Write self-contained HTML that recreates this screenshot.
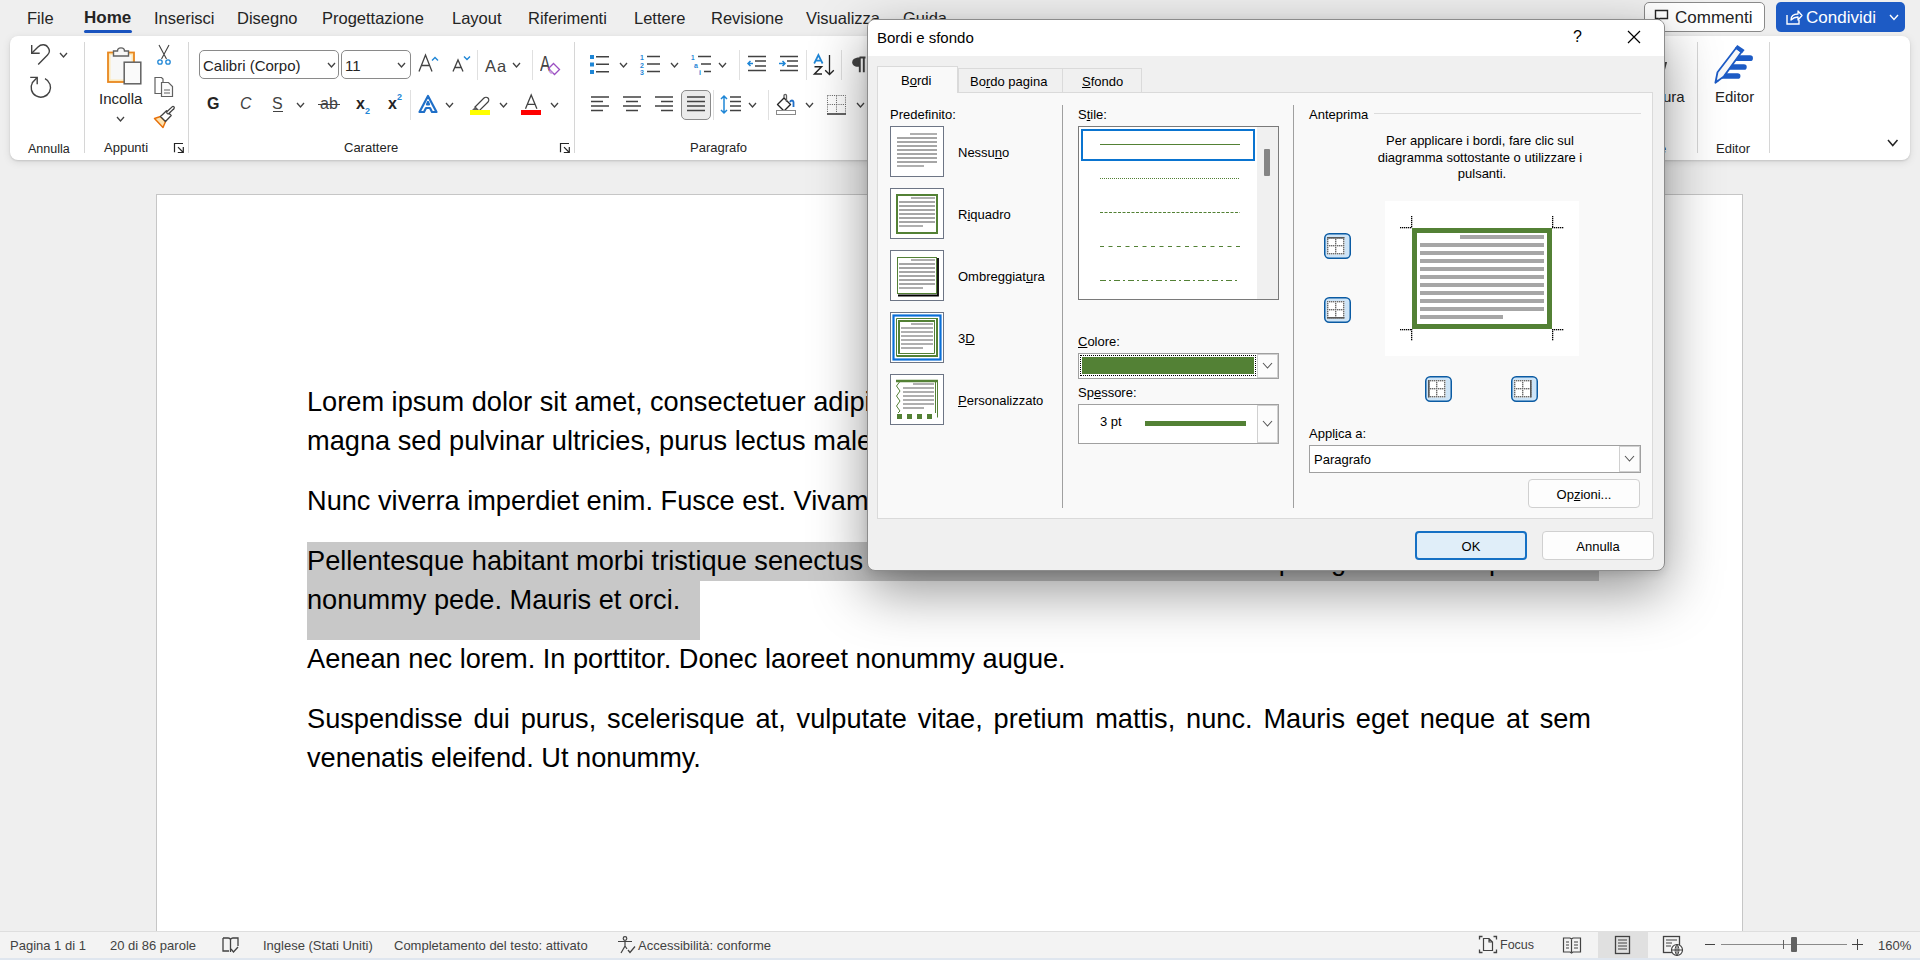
<!DOCTYPE html>
<html><head><meta charset="utf-8"><title>Word</title>
<style>
html,body{margin:0;padding:0;width:1920px;height:960px;overflow:hidden;background:#efefef;font-family:"Liberation Sans", sans-serif;}
.t{position:absolute;line-height:1;white-space:nowrap;}
u{text-decoration:underline;text-underline-offset:1px;text-decoration-thickness:1px}
svg{overflow:visible}
</style></head><body>
<div class="t" style="left:27px;top:9.83px;font-size:16.5px;color:#242424;font-weight:normal;">File</div>
<div class="t" style="left:84px;top:9.41px;font-size:17px;color:#242424;font-weight:bold;">Home</div>
<div class="t" style="left:154px;top:9.83px;font-size:16.5px;color:#242424;font-weight:normal;">Inserisci</div>
<div class="t" style="left:237px;top:9.83px;font-size:16.5px;color:#242424;font-weight:normal;">Disegno</div>
<div class="t" style="left:322px;top:9.83px;font-size:16.5px;color:#242424;font-weight:normal;">Progettazione</div>
<div class="t" style="left:452px;top:9.83px;font-size:16.5px;color:#242424;font-weight:normal;">Layout</div>
<div class="t" style="left:528px;top:9.83px;font-size:16.5px;color:#242424;font-weight:normal;">Riferimenti</div>
<div class="t" style="left:634px;top:9.83px;font-size:16.5px;color:#242424;font-weight:normal;">Lettere</div>
<div class="t" style="left:711px;top:9.83px;font-size:16.5px;color:#242424;font-weight:normal;">Revisione</div>
<div class="t" style="left:806px;top:9.83px;font-size:16.5px;color:#242424;font-weight:normal;">Visualizza</div>
<div class="t" style="left:903px;top:9.83px;font-size:16.5px;color:#242424;font-weight:normal;">Guida</div>
<div style="position:absolute;left:84px;top:30px;width:48px;height:3px;background:#1a54c0;border-radius:2px"></div>
<div style="position:absolute;left:1644px;top:2px;width:121px;height:30px;box-sizing:border-box;border:1px solid #8a8a8a;border-radius:5px;background:#fff"></div>
<svg style="position:absolute;left:1654px;top:9px;" width="16" height="16" viewBox="0 0 16 16"><path d="M1.5 1.5 H13.5 V9.5 H6 L4 11.5 V9.5 H1.5 Z" fill="none" stroke="#242424" stroke-width="1.4"/></svg>
<div class="t" style="left:1675px;top:8.81px;font-size:17px;color:#242424;font-weight:normal;">Commenti</div>
<div style="position:absolute;left:1776px;top:2px;width:129px;height:30px;background:#1d5bc5;border-radius:5px"></div>
<svg style="position:absolute;left:1785px;top:8px;" width="18" height="18" viewBox="0 0 18 18"><path d="M2 7 V16 H14 V12" fill="none" stroke="#fff" stroke-width="1.4"/><path d="M6 12 C6 8 9 6 13 6 V3 L17 7.5 L13 12 V9 C10 9 8 10 6 12Z" fill="none" stroke="#fff" stroke-width="1.3" stroke-linejoin="round"/></svg>
<div class="t" style="left:1806px;top:8.81px;font-size:17px;color:#ffffff;font-weight:normal;">Condividi</div>
<svg style="position:absolute;left:1889px;top:14px;" width="10" height="6.5" viewBox="0 0 10 6.5"><path d="M1 1 L5.0 5.5 L9 1" fill="none" stroke="#fff" stroke-width="1.4"/></svg>
<div style="position:absolute;left:10px;top:36px;width:1900px;height:124px;background:#fff;border-radius:8px;box-shadow:0 1px 2px rgba(0,0,0,0.12), 0 2px 8px rgba(0,0,0,0.10)"></div>
<svg style="position:absolute;left:28px;top:43px;" width="24" height="24" viewBox="0 0 24 24"><path d="M3.7 2 V10.3 H11.7" fill="none" stroke="#424242" stroke-width="1.4"/><path d="M3.7 10.3 L10 4 C13 1 18 1 20 4.5 C22 7 21.5 10 19.5 12 L10.2 21.6" fill="none" stroke="#424242" stroke-width="1.4"/></svg>
<svg style="position:absolute;left:59px;top:52px;" width="9" height="6" viewBox="0 0 9 6"><path d="M1 1 L4.5 5 L8 1" fill="none" stroke="#424242" stroke-width="1.3"/></svg>
<svg style="position:absolute;left:28px;top:75px;" width="24" height="24" viewBox="0 0 24 24"><path d="M2.2 2.4 H9.2 V9.3" fill="none" stroke="#424242" stroke-width="1.4"/><path d="M9.2 2.6 L4 8 M4.5 7.5 A9.7 9.7 0 1 0 17.0 3.7" fill="none" stroke="#424242" stroke-width="1.4"/></svg>
<div class="t" style="left:28px;top:143.42px;font-size:12.5px;color:#242424;font-weight:normal;">Annulla</div>
<div style="position:absolute;left:84px;top:42px;width:1px;height:111px;background:#d6d6d6"></div>
<svg style="position:absolute;left:105px;top:45px;" width="40" height="40" viewBox="0 0 40 40"><rect x="3" y="7.5" width="26" height="29.5" fill="#fde9b8" stroke="#e8871e" stroke-width="1.8"/><rect x="5.5" y="10" width="21" height="24.5" fill="#f7f7f7"/><path d="M8.5 11 V6 H12.5 C12.5 1.8 19.5 1.8 19.5 6 H23.5 V11 Z" fill="#f7f7f7" stroke="#616161" stroke-width="1.4"/><rect x="19.2" y="17.2" width="16.6" height="21.6" fill="#fafafa" stroke="#616161" stroke-width="1.5"/></svg>
<div class="t" style="left:99px;top:91.10px;font-size:15px;color:#242424;font-weight:normal;">Incolla</div>
<svg style="position:absolute;left:116px;top:116px;" width="9" height="6" viewBox="0 0 9 6"><path d="M1 1 L4.5 5 L8 1" fill="none" stroke="#424242" stroke-width="1.3"/></svg>
<svg style="position:absolute;left:155px;top:44px;" width="18" height="22" viewBox="0 0 18 22"><path d="M4 1 L11.5 15 M14 1 L6.5 15" stroke="#424242" stroke-width="1.1" fill="none"/><circle cx="5" cy="18" r="2.2" fill="none" stroke="#1f86d6" stroke-width="1.3"/><circle cx="13" cy="18" r="2.2" fill="none" stroke="#1f86d6" stroke-width="1.3"/></svg>
<svg style="position:absolute;left:153px;top:76px;" width="22" height="22" viewBox="0 0 22 22"><path d="M2 1.5 H8.5 L10 3 V17.5 H2 Z" fill="none" stroke="#616161" stroke-width="1.2"/><path d="M8.5 6.5 H15.5 L19.5 10.5 V20.5 H8.5 Z" fill="#fafafa" stroke="#616161" stroke-width="1.2"/><path d="M11 14 H17 M11 17 H17" stroke="#616161" stroke-width="1.2"/></svg>
<svg style="position:absolute;left:153px;top:107px;" width="24" height="22" viewBox="0 0 24 22"><path d="M1.5 11.5 L7.5 9.5 L12.5 14.5 L10 20.5 Z" fill="#fde3b0" stroke="#e8710a" stroke-width="1.5" stroke-linejoin="round"/><path d="M7.5 9.5 L13.5 3.8 L18.2 8.5 L12.5 14.5 Z" fill="#fff" stroke="#424242" stroke-width="1.3" stroke-linejoin="round"/><path d="M15 5.5 L20 0.8" stroke="#424242" stroke-width="3.8" stroke-linecap="round"/><path d="M15 5.5 L20 0.8" stroke="#fff" stroke-width="1.3" stroke-linecap="round"/></svg>
<div class="t" style="left:104px;top:141.00px;font-size:13px;color:#242424;font-weight:normal;">Appunti</div>
<svg style="position:absolute;left:173px;top:142px;" width="12" height="12" viewBox="0 0 12 12"><path d="M1.5 10.2 V1.5 H10" stroke="#242424" stroke-width="1.2" fill="none"/><path d="M5 5.2 L10.3 10.5 M10.3 5 V10.5 H4.8" stroke="#242424" stroke-width="1.2" fill="none"/></svg>
<div style="position:absolute;left:188px;top:42px;width:1px;height:111px;background:#d6d6d6"></div>
<div style="position:absolute;left:199px;top:50px;width:140px;height:29px;box-sizing:border-box;border:1px solid #8a8a8a;border-radius:5px;background:#fff"></div>
<div class="t" style="left:203px;top:57.90px;font-size:15px;color:#242424;font-weight:normal;">Calibri (Corpo)</div>
<svg style="position:absolute;left:327px;top:62px;" width="9" height="6" viewBox="0 0 9 6"><path d="M1 1 L4.5 5 L8 1" fill="none" stroke="#424242" stroke-width="1.3"/></svg>
<div style="position:absolute;left:341px;top:50px;width:70px;height:29px;box-sizing:border-box;border:1px solid #8a8a8a;border-radius:5px;background:#fff"></div>
<div class="t" style="left:345px;top:57.90px;font-size:15px;color:#242424;font-weight:normal;">11</div>
<svg style="position:absolute;left:397px;top:62px;" width="9" height="6" viewBox="0 0 9 6"><path d="M1 1 L4.5 5 L8 1" fill="none" stroke="#424242" stroke-width="1.3"/></svg>
<svg style="position:absolute;left:418px;top:54px;" width="16" height="18" viewBox="0 0 16 18"><path d="M1 17.6 L7.5 1 L14 17.6 M3.5 11.5 H11.5" fill="none" stroke="#424242" stroke-width="1.3"/></svg>
<svg style="position:absolute;left:431px;top:56px;" width="8" height="6" viewBox="0 0 8 6"><path d="M1 4.5 L4 1.5 L7 4.5" fill="none" stroke="#1f86d6" stroke-width="1.4"/></svg>
<svg style="position:absolute;left:452px;top:59px;" width="13" height="13" viewBox="0 0 13 13"><path d="M1 12.6 L6 1 L11 12.6 M2.8 8.5 H9.2" fill="none" stroke="#424242" stroke-width="1.3"/></svg>
<svg style="position:absolute;left:463px;top:55px;" width="8" height="6" viewBox="0 0 8 6"><path d="M1 1.5 L4 4.5 L7 1.5" fill="none" stroke="#1f86d6" stroke-width="1.4"/></svg>
<div style="position:absolute;left:477px;top:50px;width:1px;height:30px;background:#e0e0e0"></div>
<div class="t" style="left:485px;top:57.63px;font-size:16.5px;color:#424242;font-weight:normal;letter-spacing:1px">Aa</div>
<svg style="position:absolute;left:512px;top:62px;" width="9" height="6" viewBox="0 0 9 6"><path d="M1 1 L4.5 5 L8 1" fill="none" stroke="#424242" stroke-width="1.3"/></svg>
<div style="position:absolute;left:532px;top:50px;width:1px;height:30px;background:#e0e0e0"></div>
<div class="t" style="left:540px;top:52.98px;font-size:22px;color:#424242;font-weight:normal;transform:scaleX(0.7);transform-origin:left">A</div>
<svg style="position:absolute;left:547px;top:62px;" width="14" height="14" viewBox="0 0 14 14"><path d="M6.5 1.5 L12.5 7.5 L7.5 12.5 L1.5 6.5 Z" fill="none" stroke="#9b4fc2" stroke-width="1.3"/><path d="M3 8 L6 11 L4 12 L1.5 9.5Z" fill="#c89ade"/></svg>
<div class="t" style="left:207px;top:96.46px;font-size:16px;color:#242424;font-weight:bold;">G</div>
<div class="t" style="left:240px;top:96.46px;font-size:16px;color:#424242;font-weight:normal;font-style:italic">C</div>
<div class="t" style="left:272px;top:96.46px;font-size:16px;color:#424242;font-weight:normal;">S</div>
<div style="position:absolute;left:273px;top:111px;width:10px;height:1.4px;background:#424242"></div>
<svg style="position:absolute;left:296px;top:102px;" width="9" height="6" viewBox="0 0 9 6"><path d="M1 1 L4.5 5 L8 1" fill="none" stroke="#424242" stroke-width="1.3"/></svg>
<div class="t" style="left:320px;top:96.46px;font-size:16px;color:#424242;font-weight:normal;">ab</div>
<div style="position:absolute;left:318px;top:104px;width:22px;height:1.2px;background:#424242"></div>
<div class="t" style="left:356px;top:96.46px;font-size:16px;color:#242424;font-weight:bold;">x</div>
<div class="t" style="left:365px;top:107.38px;font-size:9px;color:#1f86d6;font-weight:bold;">2</div>
<div class="t" style="left:388px;top:96.46px;font-size:16px;color:#242424;font-weight:bold;">x</div>
<div class="t" style="left:397px;top:93.38px;font-size:9px;color:#1f86d6;font-weight:bold;">2</div>
<div style="position:absolute;left:410px;top:90px;width:1px;height:30px;background:#e0e0e0"></div>
<svg style="position:absolute;left:417px;top:94px;" width="22" height="20" viewBox="0 0 22 20"><path d="M2.5 18 L11 2 L19.5 18 H15 L13 14 H9 L7 18 Z M10 10.5 L11 8 L12 10.5Z" fill="#fff" stroke="#1f6fc8" stroke-width="2.2" stroke-linejoin="round"/></svg>
<svg style="position:absolute;left:445px;top:102px;" width="9" height="6" viewBox="0 0 9 6"><path d="M1 1 L4.5 5 L8 1" fill="none" stroke="#424242" stroke-width="1.3"/></svg>
<svg style="position:absolute;left:470px;top:94px;" width="22" height="22" viewBox="0 0 22 22"><path d="M5 13 L14 4 C15 3 17 3 18 4 C19 5 19 7 18 8 L9 17 Z" fill="#fff" stroke="#424242" stroke-width="1.2"/><path d="M5 13 L2 16 L6 16 L9 17Z" fill="#616161"/></svg>
<div style="position:absolute;left:470px;top:110px;width:20px;height:5px;background:#ffff00"></div>
<svg style="position:absolute;left:499px;top:102px;" width="9" height="6" viewBox="0 0 9 6"><path d="M1 1 L4.5 5 L8 1" fill="none" stroke="#424242" stroke-width="1.3"/></svg>
<svg style="position:absolute;left:523px;top:94px;" width="16" height="16" viewBox="0 0 16 16"><path d="M2.5 14.8 L8.2 1 L13.9 14.8 M4.4 10.3 H12" fill="none" stroke="#424242" stroke-width="1.3"/></svg>
<div style="position:absolute;left:521px;top:110px;width:20px;height:5px;background:#ff0000"></div>
<svg style="position:absolute;left:550px;top:102px;" width="9" height="6" viewBox="0 0 9 6"><path d="M1 1 L4.5 5 L8 1" fill="none" stroke="#424242" stroke-width="1.3"/></svg>
<div class="t" style="left:344px;top:141.00px;font-size:13px;color:#242424;font-weight:normal;">Carattere</div>
<svg style="position:absolute;left:559px;top:142px;" width="12" height="12" viewBox="0 0 12 12"><path d="M1.5 10.2 V1.5 H10" stroke="#242424" stroke-width="1.2" fill="none"/><path d="M5 5.2 L10.3 10.5 M10.3 5 V10.5 H4.8" stroke="#242424" stroke-width="1.2" fill="none"/></svg>
<div style="position:absolute;left:574px;top:42px;width:1px;height:111px;background:#d6d6d6"></div>
<svg style="position:absolute;left:588px;top:53px;" width="24" height="24" viewBox="0 0 24 24"><rect x="2" y="2" width="4" height="4" fill="#1f86d6"/><rect x="2" y="9.5" width="4" height="4" fill="#1f86d6"/><rect x="2" y="17" width="4" height="4" fill="#1f86d6"/><path d="M8 3.8 H21 M8 11.3 H21 M8 18.8 H21" stroke="#424242" stroke-width="1.5"/></svg>
<svg style="position:absolute;left:619px;top:62px;" width="9" height="6" viewBox="0 0 9 6"><path d="M1 1 L4.5 5 L8 1" fill="none" stroke="#424242" stroke-width="1.3"/></svg>
<svg style="position:absolute;left:638px;top:53px;" width="24" height="24" viewBox="0 0 24 24"><text x="2" y="7" font-size="7" font-weight="bold" fill="#1f86d6" font-family="Liberation Sans">1</text><text x="2" y="14.5" font-size="7" font-weight="bold" fill="#1f86d6" font-family="Liberation Sans">2</text><text x="2" y="22" font-size="7" font-weight="bold" fill="#1f86d6" font-family="Liberation Sans">3</text><path d="M9 3.5 H22 M9 11 H22 M9 18.5 H22" stroke="#424242" stroke-width="1.5"/></svg>
<svg style="position:absolute;left:670px;top:62px;" width="9" height="6" viewBox="0 0 9 6"><path d="M1 1 L4.5 5 L8 1" fill="none" stroke="#424242" stroke-width="1.3"/></svg>
<svg style="position:absolute;left:690px;top:53px;" width="24" height="24" viewBox="0 0 24 24"><text x="1" y="7" font-size="6.5" font-weight="bold" fill="#1f86d6" font-family="Liberation Sans">1</text><text x="4" y="14.5" font-size="7" font-weight="bold" fill="#1f86d6" font-family="Liberation Sans">a</text><text x="9" y="22" font-size="7" font-weight="bold" fill="#1f86d6" font-family="Liberation Sans">i</text><path d="M8 3.5 H21 M11 11 H21 M14 18.5 H21" stroke="#424242" stroke-width="1.5"/></svg>
<svg style="position:absolute;left:718px;top:62px;" width="9" height="6" viewBox="0 0 9 6"><path d="M1 1 L4.5 5 L8 1" fill="none" stroke="#424242" stroke-width="1.3"/></svg>
<div style="position:absolute;left:739px;top:50px;width:1px;height:30px;background:#e0e0e0"></div>
<svg style="position:absolute;left:746px;top:53px;" width="24" height="24" viewBox="0 0 24 24"><path d="M2 3.5 H20 M9 8 H20 M9 13 H20 M2 17.5 H20" stroke="#424242" stroke-width="1.5"/><path d="M7 10.5 H2 M4.5 8 L2 10.5 L4.5 13" stroke="#1f86d6" stroke-width="1.5" fill="none"/></svg>
<svg style="position:absolute;left:778px;top:53px;" width="24" height="24" viewBox="0 0 24 24"><path d="M2 3.5 H20 M9 8 H20 M9 13 H20 M2 17.5 H20" stroke="#424242" stroke-width="1.5"/><path d="M1 10.5 H7 M4.5 8 L7 10.5 L4.5 13" stroke="#1f86d6" stroke-width="1.5" fill="none"/></svg>
<div style="position:absolute;left:806px;top:50px;width:1px;height:30px;background:#e0e0e0"></div>
<svg style="position:absolute;left:812px;top:53px;" width="24" height="24" viewBox="0 0 24 24"><path d="M2.2 10.5 L6.4 2 L10.6 10.5 M3.7 7.6 H9.1" fill="none" stroke="#1f86d6" stroke-width="1.7"/><path d="M2.5 13.7 H9.5 L2.5 21 H10" fill="none" stroke="#242424" stroke-width="1.5"/><path d="M17.5 2 V21.5 M13.2 17.2 L17.5 21.5 L21.8 17.2" fill="none" stroke="#242424" stroke-width="1.3"/></svg>
<div style="position:absolute;left:841px;top:50px;width:1px;height:30px;background:#e0e0e0"></div>
<svg style="position:absolute;left:850px;top:55px;" width="18" height="20" viewBox="0 0 18 20"><path d="M9.5 2.5 C4 2.5 2.2 5 2.2 7.3 C2.2 9.8 4.2 11.8 8 11.8 H9.5 Z" fill="#424242"/><path d="M9.5 2.5 H15.5 M9.8 2.5 V17.3 M13.8 2.5 V17.3" fill="none" stroke="#424242" stroke-width="1.9"/></svg>
<svg style="position:absolute;left:589px;top:94px;" width="22" height="22" viewBox="0 0 22 22"><path d="M2 3 H20 M2 7.5 H14 M2 12 H20 M2 16.5 H14" stroke="#424242" stroke-width="1.5"/></svg>
<svg style="position:absolute;left:621px;top:94px;" width="22" height="22" viewBox="0 0 22 22"><path d="M2 3 H20 M5 7.5 H17 M2 12 H20 M5 16.5 H17" stroke="#424242" stroke-width="1.5"/></svg>
<svg style="position:absolute;left:653px;top:94px;" width="22" height="22" viewBox="0 0 22 22"><path d="M2 3 H20 M8 7.5 H20 M2 12 H20 M8 16.5 H20" stroke="#424242" stroke-width="1.5"/></svg>
<div style="position:absolute;left:681px;top:90px;width:30px;height:30px;box-sizing:border-box;border:1px solid #8a8a8a;border-radius:5px;background:#ebebeb"></div>
<svg style="position:absolute;left:685px;top:94px;" width="22" height="22" viewBox="0 0 22 22"><path d="M2 3 H20 M2 7.5 H20 M2 12 H20 M2 16.5 H20" stroke="#424242" stroke-width="1.5"/></svg>
<div style="position:absolute;left:713px;top:90px;width:1px;height:30px;background:#e0e0e0"></div>
<svg style="position:absolute;left:719px;top:94px;" width="24" height="22" viewBox="0 0 24 22"><path d="M5 2 V19 M2 5 L5 2 L8 5 M2 16 L5 19 L8 16" stroke="#1f86d6" stroke-width="1.5" fill="none"/><path d="M11 3 H22 M11 7.5 H22 M11 12 H22 M11 16.5 H22" stroke="#424242" stroke-width="1.5"/></svg>
<svg style="position:absolute;left:748px;top:102px;" width="9" height="6" viewBox="0 0 9 6"><path d="M1 1 L4.5 5 L8 1" fill="none" stroke="#424242" stroke-width="1.3"/></svg>
<div style="position:absolute;left:768px;top:90px;width:1px;height:30px;background:#e0e0e0"></div>
<svg style="position:absolute;left:775px;top:93px;" width="24" height="24" viewBox="0 0 24 24"><path d="M2.5 11.5 L9 5 L15.5 11.5 L9 18 Z" fill="#fff" stroke="#242424" stroke-width="1.4" stroke-linejoin="round"/><path d="M9 5 V2.5 C9 1 11.5 1 11.5 2.5 V9" fill="none" stroke="#616161" stroke-width="1.3"/><path d="M15 9 C16 7 18 7 18.5 9 V14" fill="none" stroke="#1f6fc8" stroke-width="1.8"/><rect x="1.5" y="17.5" width="19" height="4" fill="#fff" stroke="#8a8a8a" stroke-width="1"/></svg>
<svg style="position:absolute;left:805px;top:102px;" width="9" height="6" viewBox="0 0 9 6"><path d="M1 1 L4.5 5 L8 1" fill="none" stroke="#424242" stroke-width="1.3"/></svg>
<svg style="position:absolute;left:826px;top:94px;" width="22" height="22" viewBox="0 0 22 22"><path d="M1.5 1.5 H19.5 V19.5 M1.5 1.5 V19.5 M10.5 1.5 V19.5 M1.5 10.5 H19.5" stroke="#616161" stroke-width="1" stroke-dasharray="1 1.2" fill="none"/><path d="M1 20 H20" stroke="#424242" stroke-width="1.6"/></svg>
<svg style="position:absolute;left:856px;top:102px;" width="9" height="6" viewBox="0 0 9 6"><path d="M1 1 L4.5 5 L8 1" fill="none" stroke="#424242" stroke-width="1.3"/></svg>
<div class="t" style="left:690px;top:140.60px;font-size:13px;color:#242424;font-weight:normal;">Paragrafo</div>
<div class="t" style="left:1663px;top:89.00px;font-size:15px;color:#242424;font-weight:normal;">ura</div>
<div style="position:absolute;left:1664px;top:62px;width:2.2px;height:8px;background:#424242;transform:skewX(-15deg)"></div>
<div class="t" style="left:1659px;top:141.50px;font-size:13px;color:#242424;font-weight:normal;">e</div>
<div style="position:absolute;left:1697px;top:42px;width:1px;height:111px;background:#d6d6d6"></div>
<svg style="position:absolute;left:1713px;top:44px;" width="42" height="40" viewBox="0 0 42 40"><path d="M23 14.2 H37.1 M16.6 23 H30.9 M10 32 H24.6" stroke="#1d5bc5" stroke-width="5.7" stroke-linecap="round"/><path d="M23.3 3.8 L28.5 8 L10.9 32.4 L2.4 38.7 L4.5 28.3 Z" fill="#f8f8f8" stroke="#1d5bc5" stroke-width="1.8" stroke-linejoin="round"/><path d="M24.3 1 L31.6 5.9 L29 9.2 L21.8 4.2 Z" fill="#1d5bc5"/><path d="M2.4 38.7 L4 35.5 L6 37 Z" fill="#1d5bc5"/></svg>
<div class="t" style="left:1715px;top:89.00px;font-size:15px;color:#242424;font-weight:normal;">Editor</div>
<div class="t" style="left:1716px;top:141.50px;font-size:13px;color:#242424;font-weight:normal;">Editor</div>
<div style="position:absolute;left:1769px;top:42px;width:1px;height:111px;background:#d6d6d6"></div>
<svg style="position:absolute;left:1887px;top:139px;" width="11.5" height="7.5" viewBox="0 0 11.5 7.5"><path d="M1 1 L5.75 6.5 L10.5 1" fill="none" stroke="#242424" stroke-width="1.5"/></svg>
<div style="position:absolute;left:0px;top:160px;width:1920px;height:771px;background:#efefef;z-index:-1"></div>
<div style="position:absolute;left:156px;top:194px;width:1587px;height:737px;box-sizing:border-box;border:1px solid #c6c6c6;border-bottom:none;background:#fff"></div>
<div style="position:absolute;left:307px;top:542px;width:1292px;height:39px;background:#c8c8c8"></div>
<div style="position:absolute;left:307px;top:581px;width:393px;height:59px;background:#c8c8c8"></div>
<div class="t" style="left:307px;top:387.98px;font-size:27.2px;color:#000;">Lorem ipsum dolor sit amet, consectetuer adipiscing elit. Maecenas porttitor congue massa. Fusce</div>
<div class="t" style="left:307px;top:426.98px;font-size:27.2px;color:#000;">magna sed pulvinar ultricies, purus lectus malesuada libero, sit amet commodo magna eros quis urna.</div>
<div class="t" style="left:307px;top:486.98px;font-size:27.2px;color:#000;">Nunc viverra imperdiet enim. Fusce est. Vivamus a tellus.</div>
<div class="t" style="left:307px;top:546.98px;font-size:27.2px;color:#000;">Pellentesque habitant morbi tristique senectus et netus et malesuada fames ac</div>
<div class="t" style="left:1247px;top:546.98px;font-size:27.2px;color:#000;">turpis</div>
<div class="t" style="left:1316px;top:546.98px;font-size:27.2px;color:#000;">egestas.</div>
<div class="t" style="left:1489px;top:546.98px;font-size:27.2px;color:#000;">pharetra</div>
<div class="t" style="left:307px;top:585.98px;font-size:27.2px;color:#000;">nonummy pede. Mauris et orci.</div>
<div class="t" style="left:307px;top:644.98px;font-size:27.2px;color:#000;">Aenean nec lorem. In porttitor. Donec laoreet nonummy augue.</div>
<div class="t" style="left:307px;top:704.98px;width:1284px;font-size:27.2px;color:#000;text-align:justify;text-align-last:justify;white-space:normal">Suspendisse dui purus, scelerisque at, vulputate vitae, pretium mattis, nunc. Mauris eget neque at sem</div>
<div class="t" style="left:307px;top:743.98px;font-size:27.2px;color:#000;">venenatis eleifend. Ut nonummy.</div>
<div style="position:absolute;left:0px;top:931px;width:1920px;height:29px;background:#f3f3f3;border-top:1px solid #dedede;box-sizing:border-box"></div>
<div style="position:absolute;left:0px;top:958px;width:1920px;height:2px;background:#dfe6ef"></div>
<div class="t" style="left:10px;top:939.00px;font-size:13px;color:#424242;font-weight:normal;">Pagina 1 di 1</div>
<div class="t" style="left:110px;top:939.00px;font-size:13px;color:#424242;font-weight:normal;">20 di 86 parole</div>
<svg style="position:absolute;left:221px;top:936px;" width="20" height="18" viewBox="0 0 20 18"><path d="M2 2 H7 C8.5 2 9.5 3 9.5 4 C9.5 3 10.5 2 12 2 H17 V10 M9.5 4 V16 M2 2 V15 H8" fill="none" stroke="#424242" stroke-width="1.3"/><path d="M10 13 L12.5 16 L17 11" fill="none" stroke="#424242" stroke-width="1.3"/></svg>
<div class="t" style="left:263px;top:939.00px;font-size:13px;color:#424242;font-weight:normal;">Inglese (Stati Uniti)</div>
<div class="t" style="left:394px;top:939.00px;font-size:13px;color:#424242;font-weight:normal;">Completamento del testo: attivato</div>
<svg style="position:absolute;left:616px;top:935px;" width="22" height="20" viewBox="0 0 22 20"><circle cx="9" cy="3.5" r="1.8" fill="none" stroke="#424242" stroke-width="1.2"/><path d="M2 6.5 H16 M9 6.5 V11 L5 18 M9 11 L11 14" fill="none" stroke="#424242" stroke-width="1.2"/><path d="M12 15 L14 17.5 L19 11.5" fill="none" stroke="#424242" stroke-width="1.3"/></svg>
<div class="t" style="left:638px;top:939.00px;font-size:13px;color:#424242;font-weight:normal;">Accessibilità: conforme</div>
<svg style="position:absolute;left:1478px;top:935px;" width="20" height="19" viewBox="0 0 20 19"><path d="M1.5 4.5 V1.5 H4.5 M15.5 1.5 H18.5 V4.5 M18.5 14.5 V17.5 H15.5 M4.5 17.5 H1.5 V14.5" fill="none" stroke="#424242" stroke-width="1.3"/><path d="M5.5 3.5 H11 L14.5 7 V15.5 H5.5 Z M11 3.5 V7 H14.5" fill="none" stroke="#424242" stroke-width="1.2"/></svg>
<div class="t" style="left:1500px;top:939.42px;font-size:12.5px;color:#424242;font-weight:normal;">Focus</div>
<svg style="position:absolute;left:1562px;top:935px;" width="20" height="20" viewBox="0 0 20 20"><path d="M1.5 3 H8 L9.5 4 L11 3 H18.5 V17 H11 L9.5 18 L8 17 H1.5 Z M9.5 4 V17" fill="none" stroke="#424242" stroke-width="1.2"/><path d="M4 7 H7 M4 10 H7 M4 13 H7 M12 7 H16 M12 10 H16 M12 13 H16" stroke="#424242" stroke-width="1.2"/></svg>
<div style="position:absolute;left:1598px;top:931px;width:50px;height:27px;background:#e0e0e0"></div>
<svg style="position:absolute;left:1613px;top:935px;" width="20" height="20" viewBox="0 0 20 20"><rect x="2.5" y="1.5" width="14" height="17" fill="none" stroke="#424242" stroke-width="1.3"/><path d="M5 5 H14 M5 8 H14 M5 11 H14 M5 14 H14" stroke="#424242" stroke-width="1.2"/></svg>
<svg style="position:absolute;left:1662px;top:935px;" width="22" height="22" viewBox="0 0 22 22"><rect x="1.5" y="1.5" width="16" height="16" fill="none" stroke="#424242" stroke-width="1.3"/><path d="M4 5 H15 M4 8 H10 M4 11 H9" stroke="#424242" stroke-width="1.2"/><circle cx="15" cy="15" r="5.5" fill="#fff" stroke="#424242" stroke-width="1.2"/><path d="M9.5 15 H20.5 M15 9.5 V20.5 M15 9.5 C12.5 12 12.5 18 15 20.5 M15 9.5 C17.5 12 17.5 18 15 20.5" fill="none" stroke="#424242" stroke-width="1"/></svg>
<div style="position:absolute;left:1705px;top:944px;width:10px;height:1.3px;background:#424242"></div>
<div style="position:absolute;left:1721px;top:944px;width:126px;height:1px;background:#8a8a8a"></div>
<div style="position:absolute;left:1783px;top:940px;width:1px;height:9px;background:#616161"></div>
<div style="position:absolute;left:1791px;top:937px;width:6px;height:15px;background:#616161;border-radius:1px"></div>
<div style="position:absolute;left:1852px;top:944px;width:11px;height:1.3px;background:#424242"></div>
<div style="position:absolute;left:1856.8px;top:939px;width:1.3px;height:11px;background:#424242"></div>
<div class="t" style="left:1878px;top:939.00px;font-size:13px;color:#424242;font-weight:normal;">160%</div>
<div id="dlg" style="position:absolute;left:867px;top:19px;width:798px;height:552px;box-sizing:border-box;border:1px solid #8c8c8c;border-radius:8px;background:#f0f0f0;box-shadow:0 20px 56px rgba(0,0,0,0.42), 0 3px 8px rgba(0,0,0,0.10);overflow:hidden">
<div style="position:absolute;left:0;top:0;width:100%;height:36px;background:#fff"></div>
</div>
<div class="t" style="left:877px;top:30.30px;font-size:15px;color:#000;font-weight:normal;">Bordi e sfondo</div>
<div class="t" style="left:1573px;top:29.46px;font-size:16px;color:#000;font-weight:normal;">?</div>
<svg style="position:absolute;left:1627px;top:30px;" width="14" height="14" viewBox="0 0 14 14"><path d="M1 1 L13 13 M13 1 L1 13" stroke="#000" stroke-width="1.2"/></svg>
<div style="position:absolute;left:958px;top:68px;width:105px;height:25px;box-sizing:border-box;border:1px solid #dadada;border-bottom:none;background:#f0f0f0"></div>
<div style="position:absolute;left:1063px;top:68px;width:79px;height:25px;box-sizing:border-box;border:1px solid #dadada;border-left:none;border-bottom:none;background:#f0f0f0"></div>
<div style="position:absolute;left:877px;top:92px;width:776px;height:427px;box-sizing:border-box;border:1px solid #dadada;background:#f9f9f9"></div>
<div style="position:absolute;left:877px;top:66px;width:81px;height:27px;box-sizing:border-box;border:1px solid #dadada;border-bottom:none;background:#f9f9f9"></div>
<div class="t" style="left:901px;top:74.00px;font-size:13px;color:#000;font-weight:normal;">B<u>o</u>rdi</div>
<div class="t" style="left:970px;top:74.50px;font-size:13px;color:#000;font-weight:normal;">Bo<u>r</u>do pagina</div>
<div class="t" style="left:1082px;top:74.50px;font-size:13px;color:#000;font-weight:normal;"><u>S</u>fondo</div>
<div style="position:absolute;left:1062px;top:105px;width:1px;height:403px;background:#a0a0a0"></div>
<div style="position:absolute;left:1293px;top:105px;width:1px;height:403px;background:#a0a0a0"></div>
<div class="t" style="left:890px;top:108.00px;font-size:13px;color:#000;font-weight:normal;">Predefinito:</div>
<svg style="position:absolute;left:890px;top:126px;" width="54" height="51" viewBox="0 0 54 51"><rect x="0.5" y="0.5" width="53" height="50" fill="#fff" stroke="#6d7585" stroke-width="1"/><path d="M20 8 H47" stroke="#a6a6a6" stroke-width="1.8"/><path d="M7 12 H47" stroke="#a6a6a6" stroke-width="1.8"/><path d="M7 16 H47" stroke="#a6a6a6" stroke-width="1.8"/><path d="M7 20 H47" stroke="#a6a6a6" stroke-width="1.8"/><path d="M7 24 H47" stroke="#a6a6a6" stroke-width="1.8"/><path d="M7 28 H47" stroke="#a6a6a6" stroke-width="1.8"/><path d="M7 32 H47" stroke="#a6a6a6" stroke-width="1.8"/><path d="M7 36 H47" stroke="#a6a6a6" stroke-width="1.8"/><path d="M7 40 H34" stroke="#a6a6a6" stroke-width="1.8"/></svg>
<div class="t" style="left:958px;top:145.70px;font-size:13px;color:#000;font-weight:normal;">Nessu<u>n</u>o</div>
<svg style="position:absolute;left:890px;top:188px;" width="54" height="51" viewBox="0 0 54 51"><rect x="0.5" y="0.5" width="53" height="50" fill="#fff" stroke="#6d7585" stroke-width="1"/><rect x="7" y="7" width="40" height="38" fill="none" stroke="#538135" stroke-width="2"/><path d="M21 10 H45" stroke="#a6a6a6" stroke-width="1.8"/><path d="M9 14 H45" stroke="#a6a6a6" stroke-width="1.8"/><path d="M9 18 H45" stroke="#a6a6a6" stroke-width="1.8"/><path d="M9 22 H45" stroke="#a6a6a6" stroke-width="1.8"/><path d="M9 26 H45" stroke="#a6a6a6" stroke-width="1.8"/><path d="M9 30 H45" stroke="#a6a6a6" stroke-width="1.8"/><path d="M9 34 H45" stroke="#a6a6a6" stroke-width="1.8"/><path d="M9 38 H33" stroke="#a6a6a6" stroke-width="1.8"/></svg>
<div class="t" style="left:958px;top:207.70px;font-size:13px;color:#000;font-weight:normal;">R<u>i</u>quadro</div>
<svg style="position:absolute;left:890px;top:250px;" width="54" height="51" viewBox="0 0 54 51"><rect x="0.5" y="0.5" width="53" height="50" fill="#fff" stroke="#6d7585" stroke-width="1"/><path d="M8 45.5 H48 V8" fill="none" stroke="#000" stroke-width="1.8"/><rect x="7.5" y="7.5" width="39" height="36" fill="#fff" stroke="#538135" stroke-width="1"/><path d="M21 10 H45" stroke="#a6a6a6" stroke-width="1.8"/><path d="M9 14 H45" stroke="#a6a6a6" stroke-width="1.8"/><path d="M9 18 H45" stroke="#a6a6a6" stroke-width="1.8"/><path d="M9 22 H45" stroke="#a6a6a6" stroke-width="1.8"/><path d="M9 26 H45" stroke="#a6a6a6" stroke-width="1.8"/><path d="M9 30 H45" stroke="#a6a6a6" stroke-width="1.8"/><path d="M9 34 H45" stroke="#a6a6a6" stroke-width="1.8"/><path d="M9 38 H33" stroke="#a6a6a6" stroke-width="1.8"/></svg>
<div class="t" style="left:958px;top:269.70px;font-size:13px;color:#000;font-weight:normal;">Ombreggiat<u>u</u>ra</div>
<svg style="position:absolute;left:890px;top:312px;" width="54" height="51" viewBox="0 0 54 51"><rect x="0.5" y="0.5" width="53" height="50" fill="#fff" stroke="#6d7585" stroke-width="1"/><rect x="3.5" y="3.5" width="47" height="44" fill="none" stroke="#0a6fd8" stroke-width="2.2"/><path d="M6.5 44.5 V6.5 H47" fill="none" stroke="#538135" stroke-width="1"/><path d="M7 44 H47 V6" fill="none" stroke="#538135" stroke-width="2"/><path d="M9 42 V9 H44.5" fill="none" stroke="#538135" stroke-width="2"/><path d="M8 41.5 H44.5 V8" fill="none" stroke="#538135" stroke-width="1"/><path d="M21 12 H43" stroke="#a6a6a6" stroke-width="1.8"/><path d="M11 16 H43" stroke="#a6a6a6" stroke-width="1.8"/><path d="M11 20 H43" stroke="#a6a6a6" stroke-width="1.8"/><path d="M11 24 H43" stroke="#a6a6a6" stroke-width="1.8"/><path d="M11 28 H43" stroke="#a6a6a6" stroke-width="1.8"/><path d="M11 32 H43" stroke="#a6a6a6" stroke-width="1.8"/><path d="M11 36 H33" stroke="#a6a6a6" stroke-width="1.8"/></svg>
<div class="t" style="left:958px;top:331.70px;font-size:13px;color:#000;font-weight:normal;">3<u>D</u></div>
<svg style="position:absolute;left:890px;top:374px;" width="54" height="51" viewBox="0 0 54 51"><rect x="0.5" y="0.5" width="53" height="50" fill="#fff" stroke="#6d7585" stroke-width="1"/><path d="M6 7 H48" stroke="#538135" stroke-width="2.5"/><path d="M45.5 8 V39 M47.5 8 V43.5" stroke="#538135" stroke-width="1"/><path d="M9.5 8 L6.5 12 L10 17 L6.5 22 L10 27 L6.5 32 L10 37 L8 39" fill="none" stroke="#538135" stroke-width="1"/><rect x="7" y="40" width="5" height="5" fill="#538135"/><rect x="17" y="40" width="5" height="5" fill="#538135"/><rect x="27" y="40" width="5" height="5" fill="#538135"/><rect x="37" y="40" width="5" height="5" fill="#538135"/><path d="M23 10 H44" stroke="#a6a6a6" stroke-width="1.8"/><path d="M13 14 H44" stroke="#a6a6a6" stroke-width="1.8"/><path d="M13 18 H44" stroke="#a6a6a6" stroke-width="1.8"/><path d="M13 22 H44" stroke="#a6a6a6" stroke-width="1.8"/><path d="M13 26 H44" stroke="#a6a6a6" stroke-width="1.8"/><path d="M13 30 H44" stroke="#a6a6a6" stroke-width="1.8"/><path d="M13 34 H34" stroke="#a6a6a6" stroke-width="1.8"/></svg>
<div class="t" style="left:958px;top:393.70px;font-size:13px;color:#000;font-weight:normal;"><u>P</u>ersonalizzato</div>
<div class="t" style="left:1078px;top:107.80px;font-size:13px;color:#000;font-weight:normal;">S<u>t</u>ile:</div>
<div style="position:absolute;left:1078px;top:126px;width:201px;height:174px;box-sizing:border-box;border:1px solid #7a7a7a;background:#fff"></div>
<div style="position:absolute;left:1257px;top:127px;width:21px;height:172px;background:#f0f0f0"></div>
<div style="position:absolute;left:1264px;top:149px;width:6px;height:27px;background:#858585;border-radius:1px"></div>
<div style="position:absolute;left:1081px;top:129px;width:174px;height:32px;box-sizing:border-box;border:2px solid #0a74d0"></div>
<svg style="position:absolute;left:1098px;top:140px;" width="145" height="145" viewBox="0 0 145 145"><path d="M2 4.5 H142" stroke="#538135" stroke-width="1.2"/><path d="M2 38.5 H142" stroke="#538135" stroke-width="1" stroke-dasharray="1 1"/><path d="M2 72.5 H142" stroke="#538135" stroke-width="1.2" stroke-dasharray="3 1.5"/><path d="M2 106.5 H142" stroke="#538135" stroke-width="1.2" stroke-dasharray="4 4.5"/><path d="M2 140.5 H142" stroke="#538135" stroke-width="1.2" stroke-dasharray="6 3 2 3"/></svg>
<div class="t" style="left:1078px;top:335.30px;font-size:13px;color:#000;font-weight:normal;"><u>C</u>olore:</div>
<div style="position:absolute;left:1078px;top:353px;width:201px;height:26px;box-sizing:border-box;border:1px solid #a0a0a0;background:#fff"></div>
<div style="position:absolute;left:1080px;top:355px;width:176px;height:21px;box-sizing:border-box;border:1px dotted #000"></div>
<div style="position:absolute;left:1082px;top:357px;width:172px;height:17px;background:#538135"></div>
<div style="position:absolute;left:1257px;top:354px;width:21px;height:24px;box-sizing:border-box;border:1px solid #d0d0d0;background:#fcfcfc"></div>
<svg style="position:absolute;left:1262px;top:362px;" width="11" height="7" viewBox="0 0 11 7"><path d="M1 1 L5.5 6 L10 1" fill="none" stroke="#555" stroke-width="1.1"/></svg>
<div class="t" style="left:1078px;top:386.00px;font-size:13px;color:#000;font-weight:normal;">Sp<u>e</u>ssore:</div>
<div style="position:absolute;left:1078px;top:404px;width:201px;height:40px;box-sizing:border-box;border:1px solid #a0a0a0;background:#fff"></div>
<div class="t" style="left:1100px;top:415.30px;font-size:13px;color:#000;font-weight:normal;">3 pt</div>
<div style="position:absolute;left:1145px;top:421px;width:101px;height:5px;background:#538135"></div>
<div style="position:absolute;left:1257px;top:405px;width:21px;height:38px;box-sizing:border-box;border:1px solid #d0d0d0;background:#fcfcfc"></div>
<svg style="position:absolute;left:1262px;top:420px;" width="11" height="7" viewBox="0 0 11 7"><path d="M1 1 L5.5 6 L10 1" fill="none" stroke="#555" stroke-width="1.1"/></svg>
<div class="t" style="left:1309px;top:108.30px;font-size:13px;color:#000;font-weight:normal;">Anteprima</div>
<div style="position:absolute;left:1374px;top:113px;width:267px;height:1px;background:#dcdcdc"></div>
<div class="t" style="left:1180px;width:600px;text-align:center;top:134.00px;font-size:13px;color:#000;">Per applicare i bordi, fare clic sul</div>
<div class="t" style="left:1180px;width:600px;text-align:center;top:150.70px;font-size:13px;color:#000;">diagramma sottostante o utilizzare i</div>
<div class="t" style="left:1182px;width:600px;text-align:center;top:167.30px;font-size:13px;color:#000;">pulsanti.</div>
<div style="position:absolute;left:1385px;top:201px;width:194px;height:155px;background:#fff"></div>
<svg style="position:absolute;left:1385px;top:201px;" width="194" height="155" viewBox="0 0 194 155"><rect x="29.5" y="29.5" width="135" height="96" fill="none" stroke="#538135" stroke-width="5"/><rect x="75" y="34" width="84" height="4" fill="#a6a6a6"/><rect x="35" y="42" width="124" height="4" fill="#a6a6a6"/><rect x="35" y="50" width="124" height="4" fill="#a6a6a6"/><rect x="35" y="58" width="124" height="4" fill="#a6a6a6"/><rect x="35" y="66" width="124" height="4" fill="#a6a6a6"/><rect x="35" y="74" width="124" height="4" fill="#a6a6a6"/><rect x="35" y="82" width="124" height="4" fill="#a6a6a6"/><rect x="35" y="90" width="124" height="4" fill="#a6a6a6"/><rect x="35" y="98" width="124" height="4" fill="#a6a6a6"/><rect x="35" y="106" width="124" height="4" fill="#a6a6a6"/><rect x="35" y="114" width="83" height="4" fill="#a6a6a6"/><rect x="25" y="26" width="1.3" height="1.3" fill="#000"/><rect x="26" y="25" width="1.3" height="1.3" fill="#000"/><rect x="23" y="26" width="1.3" height="1.3" fill="#000"/><rect x="26" y="23" width="1.3" height="1.3" fill="#000"/><rect x="21" y="26" width="1.3" height="1.3" fill="#000"/><rect x="26" y="21" width="1.3" height="1.3" fill="#000"/><rect x="19" y="26" width="1.3" height="1.3" fill="#000"/><rect x="26" y="19" width="1.3" height="1.3" fill="#000"/><rect x="17" y="26" width="1.3" height="1.3" fill="#000"/><rect x="26" y="17" width="1.3" height="1.3" fill="#000"/><rect x="15" y="26" width="1.3" height="1.3" fill="#000"/><rect x="26" y="15" width="1.3" height="1.3" fill="#000"/><rect x="167" y="26" width="1.3" height="1.3" fill="#000"/><rect x="167" y="25" width="1.3" height="1.3" fill="#000"/><rect x="169" y="26" width="1.3" height="1.3" fill="#000"/><rect x="167" y="23" width="1.3" height="1.3" fill="#000"/><rect x="171" y="26" width="1.3" height="1.3" fill="#000"/><rect x="167" y="21" width="1.3" height="1.3" fill="#000"/><rect x="173" y="26" width="1.3" height="1.3" fill="#000"/><rect x="167" y="19" width="1.3" height="1.3" fill="#000"/><rect x="175" y="26" width="1.3" height="1.3" fill="#000"/><rect x="167" y="17" width="1.3" height="1.3" fill="#000"/><rect x="177" y="26" width="1.3" height="1.3" fill="#000"/><rect x="167" y="15" width="1.3" height="1.3" fill="#000"/><rect x="25" y="128" width="1.3" height="1.3" fill="#000"/><rect x="26" y="128" width="1.3" height="1.3" fill="#000"/><rect x="23" y="128" width="1.3" height="1.3" fill="#000"/><rect x="26" y="130" width="1.3" height="1.3" fill="#000"/><rect x="21" y="128" width="1.3" height="1.3" fill="#000"/><rect x="26" y="132" width="1.3" height="1.3" fill="#000"/><rect x="19" y="128" width="1.3" height="1.3" fill="#000"/><rect x="26" y="134" width="1.3" height="1.3" fill="#000"/><rect x="17" y="128" width="1.3" height="1.3" fill="#000"/><rect x="26" y="136" width="1.3" height="1.3" fill="#000"/><rect x="15" y="128" width="1.3" height="1.3" fill="#000"/><rect x="26" y="138" width="1.3" height="1.3" fill="#000"/><rect x="167" y="128" width="1.3" height="1.3" fill="#000"/><rect x="167" y="128" width="1.3" height="1.3" fill="#000"/><rect x="169" y="128" width="1.3" height="1.3" fill="#000"/><rect x="167" y="130" width="1.3" height="1.3" fill="#000"/><rect x="171" y="128" width="1.3" height="1.3" fill="#000"/><rect x="167" y="132" width="1.3" height="1.3" fill="#000"/><rect x="173" y="128" width="1.3" height="1.3" fill="#000"/><rect x="167" y="134" width="1.3" height="1.3" fill="#000"/><rect x="175" y="128" width="1.3" height="1.3" fill="#000"/><rect x="167" y="136" width="1.3" height="1.3" fill="#000"/><rect x="177" y="128" width="1.3" height="1.3" fill="#000"/><rect x="167" y="138" width="1.3" height="1.3" fill="#000"/></svg>
<svg style="position:absolute;left:1324px;top:233px;" width="27" height="26" viewBox="0 0 27 26"><rect x="0.75" y="0.75" width="25.5" height="24.5" rx="4.5" fill="#cde4f7" stroke="#0b5ba3" stroke-width="1.5"/><rect x="3" y="4" width="17.5" height="17.5" fill="#fff"/><rect x="3" y="4" width="1.4" height="1.4" fill="#6a6a6a"/><rect x="3" y="6" width="1.4" height="1.4" fill="#6a6a6a"/><rect x="3" y="8" width="1.4" height="1.4" fill="#6a6a6a"/><rect x="3" y="10" width="1.4" height="1.4" fill="#6a6a6a"/><rect x="3" y="12" width="1.4" height="1.4" fill="#6a6a6a"/><rect x="3" y="14" width="1.4" height="1.4" fill="#6a6a6a"/><rect x="3" y="16" width="1.4" height="1.4" fill="#6a6a6a"/><rect x="3" y="18" width="1.4" height="1.4" fill="#6a6a6a"/><rect x="3" y="20" width="1.4" height="1.4" fill="#6a6a6a"/><rect x="5" y="4" width="1.4" height="1.4" fill="#6a6a6a"/><rect x="5" y="12" width="1.4" height="1.4" fill="#6a6a6a"/><rect x="5" y="20" width="1.4" height="1.4" fill="#6a6a6a"/><rect x="7" y="4" width="1.4" height="1.4" fill="#6a6a6a"/><rect x="7" y="12" width="1.4" height="1.4" fill="#6a6a6a"/><rect x="7" y="20" width="1.4" height="1.4" fill="#6a6a6a"/><rect x="9" y="4" width="1.4" height="1.4" fill="#6a6a6a"/><rect x="9" y="12" width="1.4" height="1.4" fill="#6a6a6a"/><rect x="9" y="20" width="1.4" height="1.4" fill="#6a6a6a"/><rect x="11" y="4" width="1.4" height="1.4" fill="#6a6a6a"/><rect x="11" y="6" width="1.4" height="1.4" fill="#6a6a6a"/><rect x="11" y="8" width="1.4" height="1.4" fill="#6a6a6a"/><rect x="11" y="10" width="1.4" height="1.4" fill="#6a6a6a"/><rect x="11" y="12" width="1.4" height="1.4" fill="#6a6a6a"/><rect x="11" y="14" width="1.4" height="1.4" fill="#6a6a6a"/><rect x="11" y="16" width="1.4" height="1.4" fill="#6a6a6a"/><rect x="11" y="18" width="1.4" height="1.4" fill="#6a6a6a"/><rect x="11" y="20" width="1.4" height="1.4" fill="#6a6a6a"/><rect x="13" y="4" width="1.4" height="1.4" fill="#6a6a6a"/><rect x="13" y="12" width="1.4" height="1.4" fill="#6a6a6a"/><rect x="13" y="20" width="1.4" height="1.4" fill="#6a6a6a"/><rect x="15" y="4" width="1.4" height="1.4" fill="#6a6a6a"/><rect x="15" y="12" width="1.4" height="1.4" fill="#6a6a6a"/><rect x="15" y="20" width="1.4" height="1.4" fill="#6a6a6a"/><rect x="17" y="4" width="1.4" height="1.4" fill="#6a6a6a"/><rect x="17" y="12" width="1.4" height="1.4" fill="#6a6a6a"/><rect x="17" y="20" width="1.4" height="1.4" fill="#6a6a6a"/><rect x="19" y="4" width="1.4" height="1.4" fill="#6a6a6a"/><rect x="19" y="6" width="1.4" height="1.4" fill="#6a6a6a"/><rect x="19" y="8" width="1.4" height="1.4" fill="#6a6a6a"/><rect x="19" y="10" width="1.4" height="1.4" fill="#6a6a6a"/><rect x="19" y="12" width="1.4" height="1.4" fill="#6a6a6a"/><rect x="19" y="14" width="1.4" height="1.4" fill="#6a6a6a"/><rect x="19" y="16" width="1.4" height="1.4" fill="#6a6a6a"/><rect x="19" y="18" width="1.4" height="1.4" fill="#6a6a6a"/><rect x="19" y="20" width="1.4" height="1.4" fill="#6a6a6a"/><rect x="3" y="4" width="17.4" height="1.6" fill="#5a5a5a"/></svg>
<svg style="position:absolute;left:1324px;top:297px;" width="27" height="26" viewBox="0 0 27 26"><rect x="0.75" y="0.75" width="25.5" height="24.5" rx="4.5" fill="#cde4f7" stroke="#0b5ba3" stroke-width="1.5"/><rect x="3" y="4" width="17.5" height="17.5" fill="#fff"/><rect x="3" y="4" width="1.4" height="1.4" fill="#6a6a6a"/><rect x="3" y="6" width="1.4" height="1.4" fill="#6a6a6a"/><rect x="3" y="8" width="1.4" height="1.4" fill="#6a6a6a"/><rect x="3" y="10" width="1.4" height="1.4" fill="#6a6a6a"/><rect x="3" y="12" width="1.4" height="1.4" fill="#6a6a6a"/><rect x="3" y="14" width="1.4" height="1.4" fill="#6a6a6a"/><rect x="3" y="16" width="1.4" height="1.4" fill="#6a6a6a"/><rect x="3" y="18" width="1.4" height="1.4" fill="#6a6a6a"/><rect x="3" y="20" width="1.4" height="1.4" fill="#6a6a6a"/><rect x="5" y="4" width="1.4" height="1.4" fill="#6a6a6a"/><rect x="5" y="12" width="1.4" height="1.4" fill="#6a6a6a"/><rect x="5" y="20" width="1.4" height="1.4" fill="#6a6a6a"/><rect x="7" y="4" width="1.4" height="1.4" fill="#6a6a6a"/><rect x="7" y="12" width="1.4" height="1.4" fill="#6a6a6a"/><rect x="7" y="20" width="1.4" height="1.4" fill="#6a6a6a"/><rect x="9" y="4" width="1.4" height="1.4" fill="#6a6a6a"/><rect x="9" y="12" width="1.4" height="1.4" fill="#6a6a6a"/><rect x="9" y="20" width="1.4" height="1.4" fill="#6a6a6a"/><rect x="11" y="4" width="1.4" height="1.4" fill="#6a6a6a"/><rect x="11" y="6" width="1.4" height="1.4" fill="#6a6a6a"/><rect x="11" y="8" width="1.4" height="1.4" fill="#6a6a6a"/><rect x="11" y="10" width="1.4" height="1.4" fill="#6a6a6a"/><rect x="11" y="12" width="1.4" height="1.4" fill="#6a6a6a"/><rect x="11" y="14" width="1.4" height="1.4" fill="#6a6a6a"/><rect x="11" y="16" width="1.4" height="1.4" fill="#6a6a6a"/><rect x="11" y="18" width="1.4" height="1.4" fill="#6a6a6a"/><rect x="11" y="20" width="1.4" height="1.4" fill="#6a6a6a"/><rect x="13" y="4" width="1.4" height="1.4" fill="#6a6a6a"/><rect x="13" y="12" width="1.4" height="1.4" fill="#6a6a6a"/><rect x="13" y="20" width="1.4" height="1.4" fill="#6a6a6a"/><rect x="15" y="4" width="1.4" height="1.4" fill="#6a6a6a"/><rect x="15" y="12" width="1.4" height="1.4" fill="#6a6a6a"/><rect x="15" y="20" width="1.4" height="1.4" fill="#6a6a6a"/><rect x="17" y="4" width="1.4" height="1.4" fill="#6a6a6a"/><rect x="17" y="12" width="1.4" height="1.4" fill="#6a6a6a"/><rect x="17" y="20" width="1.4" height="1.4" fill="#6a6a6a"/><rect x="19" y="4" width="1.4" height="1.4" fill="#6a6a6a"/><rect x="19" y="6" width="1.4" height="1.4" fill="#6a6a6a"/><rect x="19" y="8" width="1.4" height="1.4" fill="#6a6a6a"/><rect x="19" y="10" width="1.4" height="1.4" fill="#6a6a6a"/><rect x="19" y="12" width="1.4" height="1.4" fill="#6a6a6a"/><rect x="19" y="14" width="1.4" height="1.4" fill="#6a6a6a"/><rect x="19" y="16" width="1.4" height="1.4" fill="#6a6a6a"/><rect x="19" y="18" width="1.4" height="1.4" fill="#6a6a6a"/><rect x="19" y="20" width="1.4" height="1.4" fill="#6a6a6a"/><rect x="3" y="20" width="17.4" height="1.6" fill="#5a5a5a"/></svg>
<svg style="position:absolute;left:1425px;top:376px;" width="27" height="26" viewBox="0 0 27 26"><rect x="0.75" y="0.75" width="25.5" height="24.5" rx="4.5" fill="#cde4f7" stroke="#0b5ba3" stroke-width="1.5"/><rect x="3" y="4" width="17.5" height="17.5" fill="#fff"/><rect x="3" y="4" width="1.4" height="1.4" fill="#6a6a6a"/><rect x="3" y="6" width="1.4" height="1.4" fill="#6a6a6a"/><rect x="3" y="8" width="1.4" height="1.4" fill="#6a6a6a"/><rect x="3" y="10" width="1.4" height="1.4" fill="#6a6a6a"/><rect x="3" y="12" width="1.4" height="1.4" fill="#6a6a6a"/><rect x="3" y="14" width="1.4" height="1.4" fill="#6a6a6a"/><rect x="3" y="16" width="1.4" height="1.4" fill="#6a6a6a"/><rect x="3" y="18" width="1.4" height="1.4" fill="#6a6a6a"/><rect x="3" y="20" width="1.4" height="1.4" fill="#6a6a6a"/><rect x="5" y="4" width="1.4" height="1.4" fill="#6a6a6a"/><rect x="5" y="12" width="1.4" height="1.4" fill="#6a6a6a"/><rect x="5" y="20" width="1.4" height="1.4" fill="#6a6a6a"/><rect x="7" y="4" width="1.4" height="1.4" fill="#6a6a6a"/><rect x="7" y="12" width="1.4" height="1.4" fill="#6a6a6a"/><rect x="7" y="20" width="1.4" height="1.4" fill="#6a6a6a"/><rect x="9" y="4" width="1.4" height="1.4" fill="#6a6a6a"/><rect x="9" y="12" width="1.4" height="1.4" fill="#6a6a6a"/><rect x="9" y="20" width="1.4" height="1.4" fill="#6a6a6a"/><rect x="11" y="4" width="1.4" height="1.4" fill="#6a6a6a"/><rect x="11" y="6" width="1.4" height="1.4" fill="#6a6a6a"/><rect x="11" y="8" width="1.4" height="1.4" fill="#6a6a6a"/><rect x="11" y="10" width="1.4" height="1.4" fill="#6a6a6a"/><rect x="11" y="12" width="1.4" height="1.4" fill="#6a6a6a"/><rect x="11" y="14" width="1.4" height="1.4" fill="#6a6a6a"/><rect x="11" y="16" width="1.4" height="1.4" fill="#6a6a6a"/><rect x="11" y="18" width="1.4" height="1.4" fill="#6a6a6a"/><rect x="11" y="20" width="1.4" height="1.4" fill="#6a6a6a"/><rect x="13" y="4" width="1.4" height="1.4" fill="#6a6a6a"/><rect x="13" y="12" width="1.4" height="1.4" fill="#6a6a6a"/><rect x="13" y="20" width="1.4" height="1.4" fill="#6a6a6a"/><rect x="15" y="4" width="1.4" height="1.4" fill="#6a6a6a"/><rect x="15" y="12" width="1.4" height="1.4" fill="#6a6a6a"/><rect x="15" y="20" width="1.4" height="1.4" fill="#6a6a6a"/><rect x="17" y="4" width="1.4" height="1.4" fill="#6a6a6a"/><rect x="17" y="12" width="1.4" height="1.4" fill="#6a6a6a"/><rect x="17" y="20" width="1.4" height="1.4" fill="#6a6a6a"/><rect x="19" y="4" width="1.4" height="1.4" fill="#6a6a6a"/><rect x="19" y="6" width="1.4" height="1.4" fill="#6a6a6a"/><rect x="19" y="8" width="1.4" height="1.4" fill="#6a6a6a"/><rect x="19" y="10" width="1.4" height="1.4" fill="#6a6a6a"/><rect x="19" y="12" width="1.4" height="1.4" fill="#6a6a6a"/><rect x="19" y="14" width="1.4" height="1.4" fill="#6a6a6a"/><rect x="19" y="16" width="1.4" height="1.4" fill="#6a6a6a"/><rect x="19" y="18" width="1.4" height="1.4" fill="#6a6a6a"/><rect x="19" y="20" width="1.4" height="1.4" fill="#6a6a6a"/><rect x="3" y="4" width="1.6" height="17.4" fill="#5a5a5a"/></svg>
<svg style="position:absolute;left:1511px;top:376px;" width="27" height="26" viewBox="0 0 27 26"><rect x="0.75" y="0.75" width="25.5" height="24.5" rx="4.5" fill="#cde4f7" stroke="#0b5ba3" stroke-width="1.5"/><rect x="3" y="4" width="17.5" height="17.5" fill="#fff"/><rect x="3" y="4" width="1.4" height="1.4" fill="#6a6a6a"/><rect x="3" y="6" width="1.4" height="1.4" fill="#6a6a6a"/><rect x="3" y="8" width="1.4" height="1.4" fill="#6a6a6a"/><rect x="3" y="10" width="1.4" height="1.4" fill="#6a6a6a"/><rect x="3" y="12" width="1.4" height="1.4" fill="#6a6a6a"/><rect x="3" y="14" width="1.4" height="1.4" fill="#6a6a6a"/><rect x="3" y="16" width="1.4" height="1.4" fill="#6a6a6a"/><rect x="3" y="18" width="1.4" height="1.4" fill="#6a6a6a"/><rect x="3" y="20" width="1.4" height="1.4" fill="#6a6a6a"/><rect x="5" y="4" width="1.4" height="1.4" fill="#6a6a6a"/><rect x="5" y="12" width="1.4" height="1.4" fill="#6a6a6a"/><rect x="5" y="20" width="1.4" height="1.4" fill="#6a6a6a"/><rect x="7" y="4" width="1.4" height="1.4" fill="#6a6a6a"/><rect x="7" y="12" width="1.4" height="1.4" fill="#6a6a6a"/><rect x="7" y="20" width="1.4" height="1.4" fill="#6a6a6a"/><rect x="9" y="4" width="1.4" height="1.4" fill="#6a6a6a"/><rect x="9" y="12" width="1.4" height="1.4" fill="#6a6a6a"/><rect x="9" y="20" width="1.4" height="1.4" fill="#6a6a6a"/><rect x="11" y="4" width="1.4" height="1.4" fill="#6a6a6a"/><rect x="11" y="6" width="1.4" height="1.4" fill="#6a6a6a"/><rect x="11" y="8" width="1.4" height="1.4" fill="#6a6a6a"/><rect x="11" y="10" width="1.4" height="1.4" fill="#6a6a6a"/><rect x="11" y="12" width="1.4" height="1.4" fill="#6a6a6a"/><rect x="11" y="14" width="1.4" height="1.4" fill="#6a6a6a"/><rect x="11" y="16" width="1.4" height="1.4" fill="#6a6a6a"/><rect x="11" y="18" width="1.4" height="1.4" fill="#6a6a6a"/><rect x="11" y="20" width="1.4" height="1.4" fill="#6a6a6a"/><rect x="13" y="4" width="1.4" height="1.4" fill="#6a6a6a"/><rect x="13" y="12" width="1.4" height="1.4" fill="#6a6a6a"/><rect x="13" y="20" width="1.4" height="1.4" fill="#6a6a6a"/><rect x="15" y="4" width="1.4" height="1.4" fill="#6a6a6a"/><rect x="15" y="12" width="1.4" height="1.4" fill="#6a6a6a"/><rect x="15" y="20" width="1.4" height="1.4" fill="#6a6a6a"/><rect x="17" y="4" width="1.4" height="1.4" fill="#6a6a6a"/><rect x="17" y="12" width="1.4" height="1.4" fill="#6a6a6a"/><rect x="17" y="20" width="1.4" height="1.4" fill="#6a6a6a"/><rect x="19" y="4" width="1.4" height="1.4" fill="#6a6a6a"/><rect x="19" y="6" width="1.4" height="1.4" fill="#6a6a6a"/><rect x="19" y="8" width="1.4" height="1.4" fill="#6a6a6a"/><rect x="19" y="10" width="1.4" height="1.4" fill="#6a6a6a"/><rect x="19" y="12" width="1.4" height="1.4" fill="#6a6a6a"/><rect x="19" y="14" width="1.4" height="1.4" fill="#6a6a6a"/><rect x="19" y="16" width="1.4" height="1.4" fill="#6a6a6a"/><rect x="19" y="18" width="1.4" height="1.4" fill="#6a6a6a"/><rect x="19" y="20" width="1.4" height="1.4" fill="#6a6a6a"/><rect x="19" y="4" width="1.6" height="17.4" fill="#5a5a5a"/></svg>
<div class="t" style="left:1309px;top:427.00px;font-size:13px;color:#000;font-weight:normal;">Appl<u>i</u>ca a:</div>
<div style="position:absolute;left:1309px;top:445px;width:332px;height:28px;box-sizing:border-box;border:1px solid #a0a0a0;background:#fff"></div>
<div class="t" style="left:1314px;top:452.70px;font-size:13px;color:#000;font-weight:normal;">Paragrafo</div>
<div style="position:absolute;left:1619px;top:446px;width:21px;height:26px;box-sizing:border-box;border:1px solid #d0d0d0;background:#fcfcfc"></div>
<svg style="position:absolute;left:1624px;top:454.5px;" width="11" height="7" viewBox="0 0 11 7"><path d="M1 1 L5.5 6 L10 1" fill="none" stroke="#555" stroke-width="1.1"/></svg>
<div style="position:absolute;left:1528px;top:479px;width:112px;height:29px;box-sizing:border-box;border:1px solid #d0d0d0;border-radius:4px;background:#fdfdfd"></div>
<div class="t" style="left:1284px;width:600px;text-align:center;top:488.00px;font-size:13px;color:#000;">Op<u>z</u>ioni...</div>
<div style="position:absolute;left:1415px;top:531px;width:112px;height:29px;box-sizing:border-box;border:2px solid #1570c4;border-radius:4px;background:#e0eef9"></div>
<div class="t" style="left:1171px;width:600px;text-align:center;top:540.40px;font-size:13px;color:#000;">OK</div>
<div style="position:absolute;left:1542px;top:531px;width:112px;height:29px;box-sizing:border-box;border:1px solid #d0d0d0;border-radius:4px;background:#fdfdfd"></div>
<div class="t" style="left:1298px;width:600px;text-align:center;top:540.40px;font-size:13px;color:#000;">Annulla</div>
</body></html>
